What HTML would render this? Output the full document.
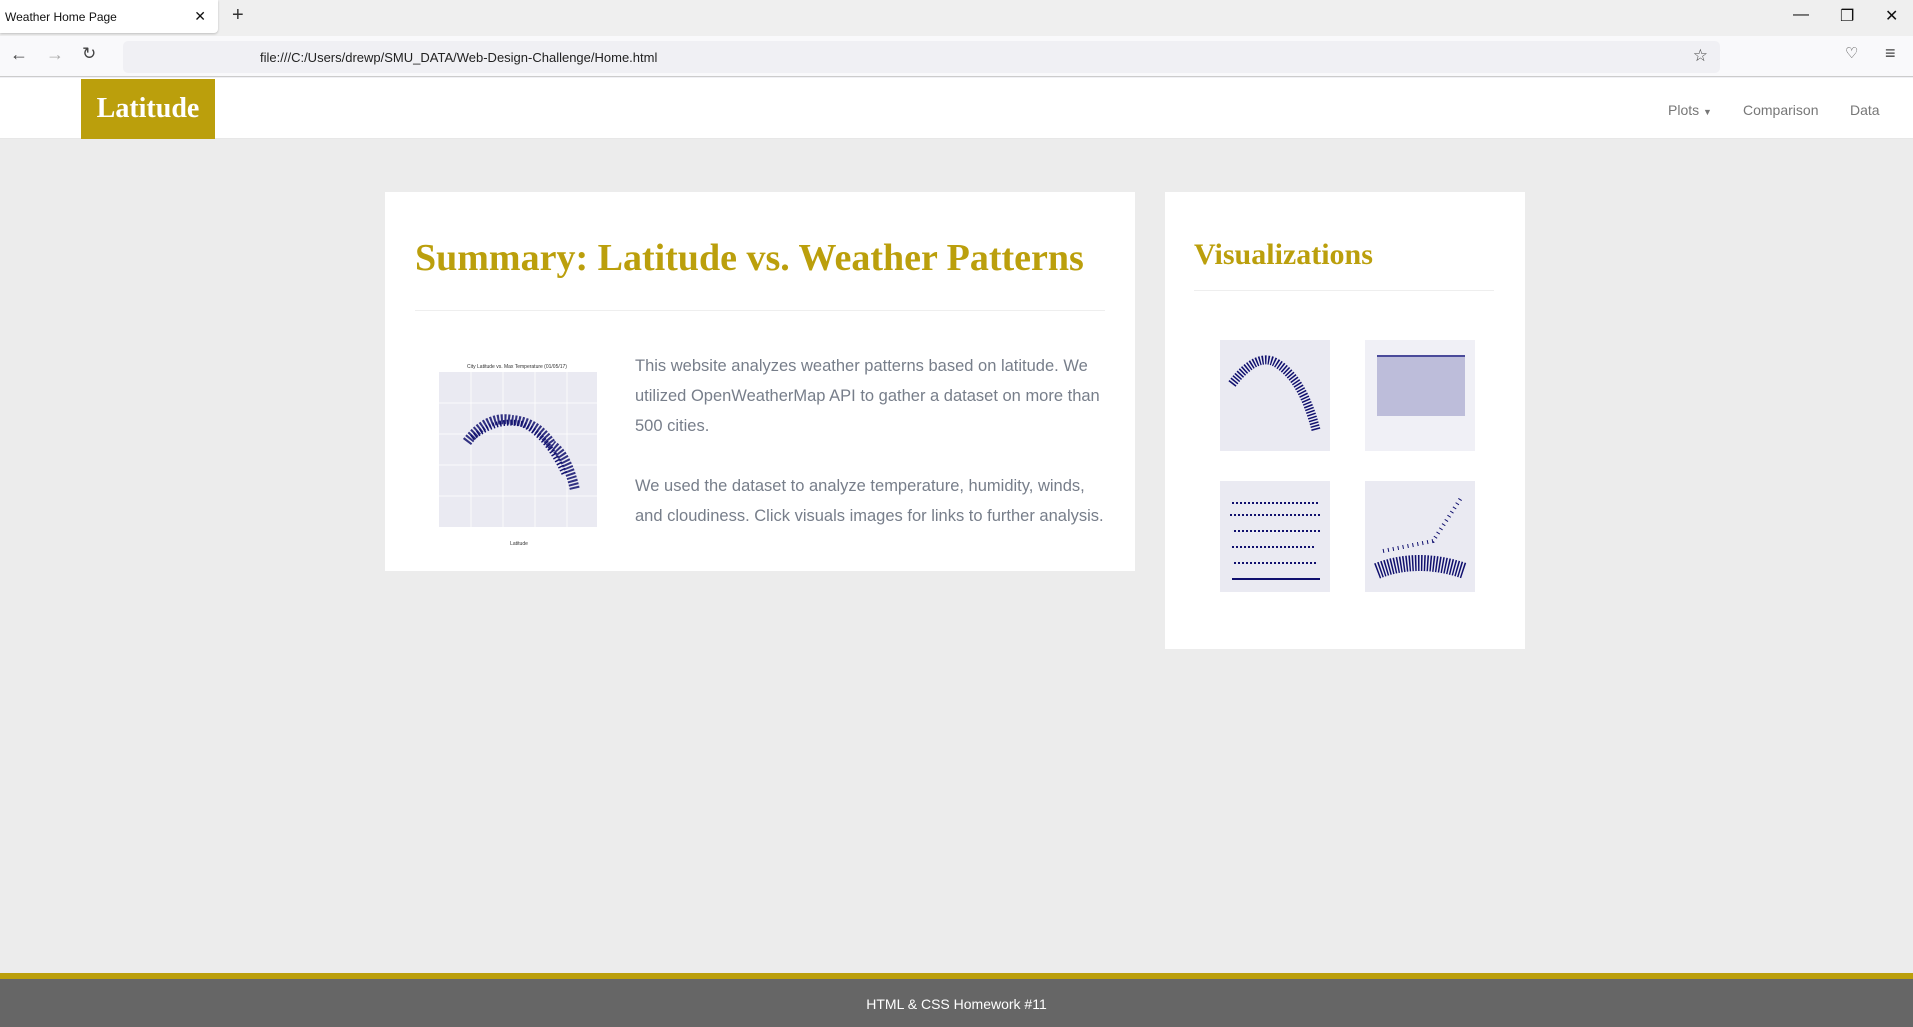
<!DOCTYPE html>
<html><head><meta charset="utf-8"><style>
*{margin:0;padding:0;box-sizing:border-box}
body{width:1913px;height:1027px;background:#ececec;font-family:"Liberation Sans",sans-serif;position:relative;overflow:hidden}
.chrome{position:absolute;left:0;top:0;width:1913px;height:78px;background:#f0f0f4}
.tabbar{position:absolute;top:0;left:0;width:1913px;height:36px;background:#efefef}
.tab{position:absolute;left:0;top:0;width:218px;height:33px;background:#fff;border-radius:0 0 4px 0;box-shadow:0 1px 2px rgba(0,0,0,.2);font-size:12px;padding:10px 5px;color:#111}
.tab span{position:absolute;right:12px;top:8px;font-size:14px}
.plus{position:absolute;left:232px;top:4px;font-size:20px;color:#333}
.wc{position:absolute;top:6px;font-size:16px;color:#111}
.addr{position:absolute;top:36px;left:0;width:1913px;height:41px;background:#f9f9fb;border-bottom:1px solid #ccc}
.url{position:absolute;left:123px;top:41px;width:1597px;height:32px;background:#f0f0f4;border-radius:5px;font-size:13px;color:#222;padding:9px 0 0 137px}
.nav{position:absolute;top:78px;left:0;width:1913px;height:61px;background:#fff;border-bottom:1px solid #e7e7e7}
.logo{position:absolute;left:81px;top:1px;width:134px;height:60px;background:#bb9f0c;color:#fff;font-family:"Liberation Serif",serif;font-weight:bold;font-size:28px;text-align:center;line-height:60px}
.nav a{position:absolute;top:24px;font-size:14px;color:#777;text-decoration:none}
.panel{position:absolute;background:#fff}
h1,h2{font-family:"Liberation Serif",serif;color:#bb9f0c;font-weight:bold;white-space:nowrap}
hr{border:0;border-top:1px solid #eee;position:absolute}
p{position:absolute;font-size:16.5px;line-height:30px;color:#777e8a}
.foot{position:absolute;left:0;top:973px;width:1913px;height:54px;background:#666;border-top:6px solid #bb9f0c;color:#fff;text-align:center;font-size:14px;padding-top:17px}
</style></head><body>
<div class="chrome">
<div class="tabbar"><div class="tab">Weather Home Page<span>✕</span></div><div class="plus">+</div>
<div class="wc" style="left:1793px">—</div><div class="wc" style="left:1840px">❐</div><div class="wc" style="left:1885px">✕</div></div>
<div class="addr"><span style="position:absolute;left:10px;top:8px;font-size:18px;color:#444">←</span><span style="position:absolute;left:46px;top:8px;font-size:18px;color:#aaa">→</span><span style="position:absolute;left:82px;top:8px;font-size:17px;color:#444">↻</span>
<span style="position:absolute;left:1885px;top:7px;font-size:18px;color:#444">≡</span><span style="position:absolute;left:1845px;top:8px;font-size:15px;color:#444">♡</span></div>
<div class="url">file:///C:/Users/drewp/SMU_DATA/Web-Design-Challenge/Home.html<span style="position:absolute;right:12px;top:5px;font-size:17px;color:#444">☆</span></div>
</div>
<div class="nav"><div class="logo">Latitude</div>
<a style="left:1668px">Plots <span style="font-size:9px">▼</span></a><a style="left:1743px">Comparison</a><a style="left:1850px">Data</a></div>

<div class="panel" style="left:385px;top:192px;width:750px;height:379px">
<h1 style="position:absolute;left:30px;top:44px;font-size:38px">Summary: Latitude vs. Weather Patterns</h1>
<hr style="left:30px;top:118px;width:690px">
<svg style="position:absolute;left:42px;top:168px" width="185" height="190" viewBox="0 0 185 190">
<text x="90" y="8" font-size="5" text-anchor="middle" fill="#333" font-family="Liberation Sans">City Latitude vs. Max Temperature (01/05/17)</text>
<rect x="12" y="12" width="158" height="155" fill="#eaeaf2"/>
<g stroke="#fff" stroke-width=".7"><line x1="12" y1="43" x2="170" y2="43"/><line x1="12" y1="74" x2="170" y2="74"/><line x1="12" y1="105" x2="170" y2="105"/><line x1="12" y1="136" x2="170" y2="136"/><line x1="44" y1="12" x2="44" y2="167"/><line x1="76" y1="12" x2="76" y2="167"/><line x1="108" y1="12" x2="108" y2="167"/><line x1="140" y1="12" x2="140" y2="167"/></g>
<path d="M40 82 Q60 55 85 60 Q110 62 125 85 Q140 95 148 130" fill="none" stroke="#10106e" stroke-width="10" stroke-dasharray="2 1.5" opacity=".85"/>
<path d="M45 78 Q70 58 95 64 Q120 75 138 115" fill="none" stroke="#10106e" stroke-width="6" stroke-dasharray="1.5 2"/>
<text x="92" y="185" font-size="5" text-anchor="middle" fill="#333">Latitude</text>
</svg>
<p style="left:250px;top:159px;width:480px">This website analyzes weather patterns based on latitude. We utilized OpenWeatherMap API to gather a dataset on more than 500 cities.</p>
<p style="left:250px;top:279px;width:480px">We used the dataset to analyze temperature, humidity, winds, and cloudiness. Click visuals images for links to further analysis.</p>
</div>

<div class="panel" style="left:1165px;top:192px;width:360px;height:457px">
<h2 style="position:absolute;left:29px;top:46px;font-size:30px">Visualizations</h2>
<hr style="left:29px;top:98px;width:300px">
<svg style="position:absolute;left:43px;top:140px" width="280" height="270">
<g><rect x="12" y="8" width="110" height="111" fill="#eaeaf2"/><path d="M24 52 Q50 18 70 32 Q95 48 108 98" fill="none" stroke="#10106e" stroke-width="9" stroke-dasharray="1.5 1.5"/></g>
<g transform="translate(145,0)"><rect x="12" y="8" width="110" height="111" fill="#f0f0f6"/><rect x="24" y="24" width="88" height="60" fill="#8a8abd" opacity=".5"/><line x1="24" y1="24" x2="112" y2="24" stroke="#4a4a9a" stroke-width="2"/></g>
<g transform="translate(0,141)"><rect x="12" y="8" width="110" height="111" fill="#eaeaf2"/><g stroke="#10106e" stroke-width="2" stroke-dasharray="2 2"><line x1="24" y1="30" x2="112" y2="30"/><line x1="22" y1="42" x2="112" y2="42"/><line x1="26" y1="58" x2="112" y2="58"/><line x1="24" y1="74" x2="106" y2="74"/><line x1="26" y1="90" x2="110" y2="90"/><line x1="24" y1="106" x2="112" y2="106" stroke-dasharray="0"/></g></g>
<g transform="translate(145,141)"><rect x="12" y="8" width="110" height="111" fill="#eaeaf2"/><path d="M24 98 Q65 82 112 98" fill="none" stroke="#10106e" stroke-width="16" stroke-dasharray="1.5 1.5"/><path d="M30 78 L80 68 L108 25" fill="none" stroke="#10106e" stroke-width="4" stroke-dasharray="1 4"/></g>
</svg>
</div>

<div class="foot">HTML &amp; CSS Homework #11</div>
</body></html>
